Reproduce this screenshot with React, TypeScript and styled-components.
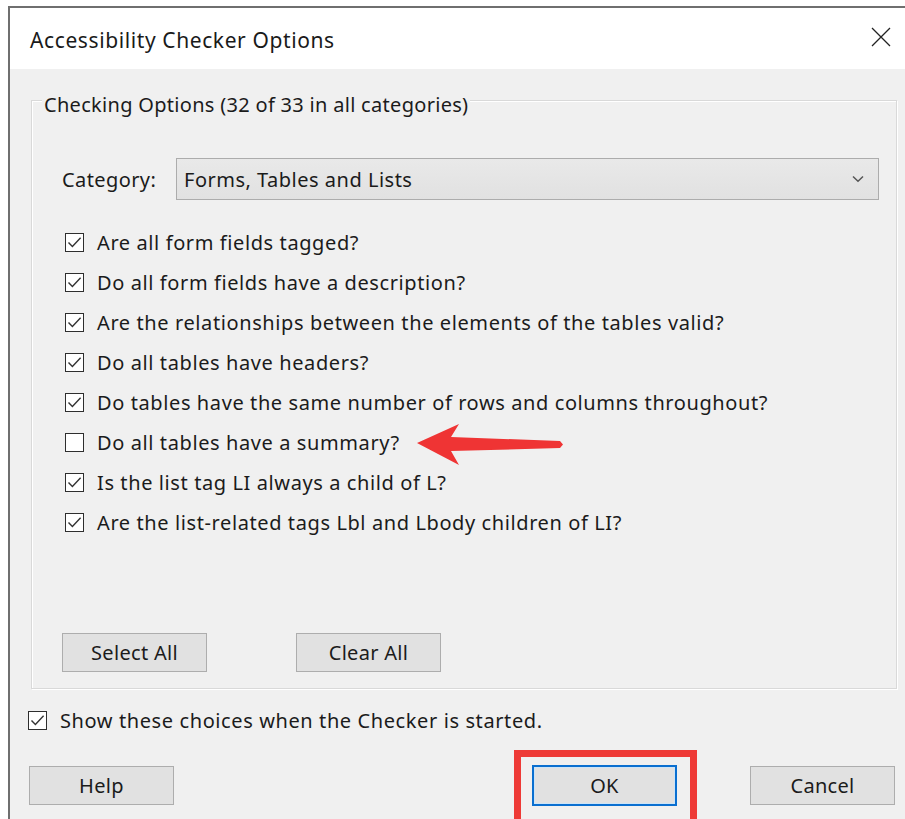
import React from "react";
import styled, { createGlobalStyle } from "styled-components";

const Global = createGlobalStyle`
  html, body {
    margin: 0;
    padding: 0;
    background: #ffffff;
  }
  body {
    font-family: "Noto Sans", "Open Sans", Arial, sans-serif;
    color: #1b1b1b;
    overflow: hidden;
  }
`;

const Dialog = styled.div`
  position: relative;
  margin: 6px 0 0 8px;
  height: 813px;
  border-top: 2px solid #6f6f6f;
  border-left: 2px solid #6f6f6f;
  background: #f0f0f0;
  display: flex;
  flex-direction: column;
`;

const TitleBar = styled.div`
  height: 61px;
  background: #ffffff;
  display: flex;
  align-items: center;
  justify-content: space-between;
  padding: 0 12px 0 20px;
`;

const Title = styled.span`
  font-size: 21px;
  letter-spacing: 0.6px;
  color: #1a1a1a;
  margin-top: 2px;
`;

const CloseButton = styled.button`
  border: 0;
  background: transparent;
  padding: 0;
  width: 24px;
  height: 24px;
  display: flex;
  align-items: center;
  justify-content: center;
  margin-top: -4px;
`;

const Content = styled.div`
  flex: 1;
  display: flex;
  flex-direction: column;
  padding: 31px 8px 0 21px;
`;

const GroupBox = styled.div`
  position: relative;
  border: 1px solid #d9d9d9;
  box-shadow: inset 1px 1px 0 #ffffff, 1px 1px 0 #ffffff;
  padding: 55px 17px 16px 30px;
  display: flex;
  flex-direction: column;
`;

const Legend = styled.span`
  position: absolute;
  top: -9px;
  left: 10px;
  padding: 0 2px;
  background: #f0f0f0;
  font-size: 20px;
  letter-spacing: 0.3px;
  line-height: 26px;
`;

const CategoryRow = styled.div`
  display: flex;
  align-items: center;
  margin-top: 2px;
  margin-bottom: -2px;
`;

const FieldLabel = styled.span`
  width: 114px;
  font-size: 20px;
  letter-spacing: 0.4px;
`;

const Select = styled.div`
  flex: 1;
  height: 42px;
  box-sizing: border-box;
  border: 1px solid #acacac;
  background: linear-gradient(#e9e9e9, #e1e1e1);
  display: flex;
  align-items: center;
  justify-content: space-between;
  padding: 0 14px 0 7px;
  font-size: 20px;
  letter-spacing: 0.5px;
`;

const OptionList = styled.div`
  display: flex;
  flex-direction: column;
  margin-top: 24px;
`;

const OptionRow = styled.label<{ $inset?: number }>`
  height: 40px;
  display: flex;
  align-items: center;
  gap: 13px;
  padding-left: ${(p) => p.$inset ?? 3}px;
  font-size: 20px;
  letter-spacing: 0.6px;
  white-space: nowrap;
`;

const Box = styled.span`
  width: 19px;
  height: 19px;
  box-sizing: border-box;
  border: 1px solid #2e2e2e;
  background: #ffffff;
  display: flex;
  align-items: center;
  justify-content: center;
  flex: none;
`;

const ButtonRow = styled.div`
  display: flex;
  gap: 89px;
  margin-top: 91px;
`;

const Button = styled.button<{ $default?: boolean }>`
  width: 145px;
  height: ${(p) => (p.$default ? 41 : 39)}px;
  box-sizing: border-box;
  border: ${(p) => (p.$default ? "2px solid #0a6fd0" : "1px solid #adadad")};
  box-shadow: ${(p) => (p.$default ? "inset 0 0 0 1px #cde4f7" : "none")};
  background: #e1e1e1;
  font-family: inherit;
  font-size: 20px;
  letter-spacing: 0.3px;
  color: #1b1b1b;
  padding: 0;
`;

const FooterCheck = styled.div`
  margin-top: 19px;
  margin-left: -3px;
  height: 24px;
  display: flex;
  align-items: center;
`;

const Footer = styled.div`
  display: flex;
  align-items: center;
  margin-top: 33px;
  padding: 0 10px 0 19px;
  margin-left: -21px;
  margin-right: -8px;
`;

const Spacer = styled.div`
  flex: 1;
`;

const Highlight = styled.div`
  position: relative;
  margin-right: 73px;
  &::after {
    content: "";
    position: absolute;
    left: -18px;
    right: -20px;
    top: -15px;
    bottom: -30px;
    border: 7px solid #ee3a36;
    pointer-events: none;
  }
`;

const Arrow = styled.svg`
  position: absolute;
  left: 402px;
  top: 412px;
`;

const Check = () => (
  <svg width="15" height="13" viewBox="0 0 15 13">
    <path d="M1.5 6.6 L5.4 10.6 L13.6 1.8" fill="none" stroke="#333" strokeWidth="1.4" />
  </svg>
);

const options: [string, boolean][] = [
  ["Are all form fields tagged?", true],
  ["Do all form fields have a description?", true],
  ["Are the relationships between the elements of the tables valid?", true],
  ["Do all tables have headers?", true],
  ["Do tables have the same number of rows and columns throughout?", true],
  ["Do all tables have a summary?", false],
  ["Is the list tag LI always a child of L?", true],
  ["Are the list-related tags Lbl and Lbody children of LI?", true],
];

export default function App() {
  return (
    <>
      <Global />
      <Dialog>
        <TitleBar>
          <Title>Accessibility Checker Options</Title>
          <CloseButton aria-label="Close">
            <svg width="20" height="20" viewBox="0 0 20 20">
              <path d="M1 1 L19 19 M19 1 L1 19" stroke="#222" strokeWidth="1.3" />
            </svg>
          </CloseButton>
        </TitleBar>
        <Content>
          <GroupBox>
            <Legend>Checking Options (32 of 33 in all categories)</Legend>
            <CategoryRow>
              <FieldLabel>Category:</FieldLabel>
              <Select>
                <span>Forms, Tables and Lists</span>
                <svg width="12" height="8" viewBox="0 0 12 8">
                  <path d="M1 1.5 L6 6.2 L11 1.5" fill="none" stroke="#555" strokeWidth="1.5" />
                </svg>
              </Select>
            </CategoryRow>
            <OptionList>
              {options.map(([text, on]) => (
                <OptionRow key={text}>
                  <Box>{on && <Check />}</Box>
                  {text}
                </OptionRow>
              ))}
            </OptionList>
            <ButtonRow>
              <Button>Select All</Button>
              <Button>Clear All</Button>
            </ButtonRow>
          </GroupBox>
          <FooterCheck>
            <OptionRow $inset={0}>
              <Box>
                <Check />
              </Box>
              Show these choices when the Checker is started.
            </OptionRow>
          </FooterCheck>
          <Footer>
            <Button>Help</Button>
            <Spacer />
            <Highlight>
              <Button $default>OK</Button>
            </Highlight>
            <Button>Cancel</Button>
          </Footer>
        </Content>
        <Arrow width="160" height="50" viewBox="0 0 160 50">
          <polygon
            points="5,23 47,4 39,17 148,21 151,24.5 148,28 39,31 47,45"
            fill="#ef3434"
          />
        </Arrow>
      </Dialog>
    </>
  );
}
